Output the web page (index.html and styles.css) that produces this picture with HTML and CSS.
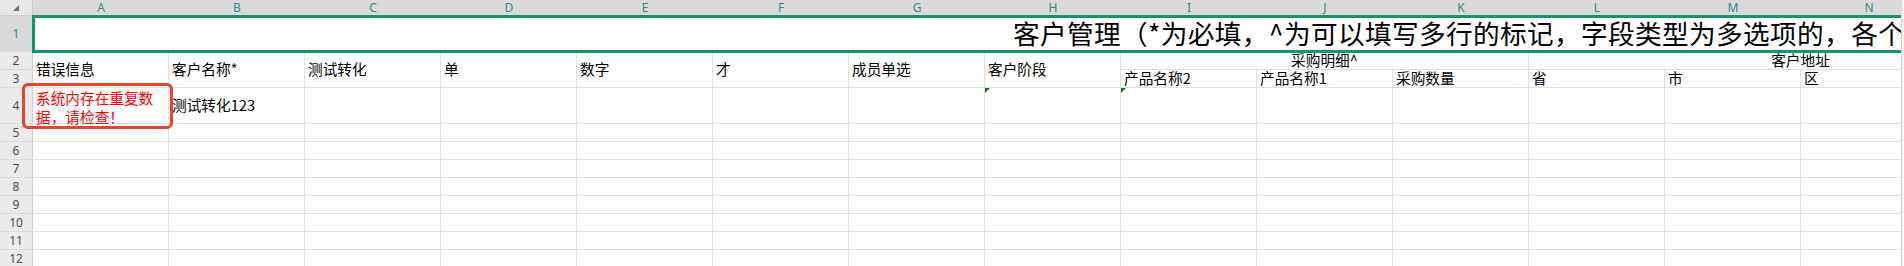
FILE: index.html
```html
<!DOCTYPE html>
<html lang="zh-CN">
  <head>
    <meta charset="UTF-8" />
    <meta name="viewport" content="width=device-width, initial-scale=1.0" />
    <title>客户管理</title>
    <link rel="stylesheet" href="styles.css">
  </head>
  <body>
    <div class="app">
      <div class="sheet">
        <div class="grid">
          <!-- column headers -->
          <div class="corner"><span class="corner-tri"></span></div>
          <div class="ch">A</div><div class="ch">B</div><div class="ch">C</div><div class="ch">D</div><div class="ch">E</div>
          <div class="ch">F</div><div class="ch">G</div><div class="ch">H</div><div class="ch">I</div><div class="ch">J</div>
          <div class="ch">K</div><div class="ch">L</div><div class="ch">M</div><div class="ch">N</div><div class="ch">O</div>

          <!-- row 1: title -->
          <div class="rh on">1</div>
          <div class="c title">客户管理（*为必填，^为可以填写多行的标记，字段类型为多选项的，各个选项用英文逗号隔开）</div>

          <!-- rows 2-3: field headers -->
          <div class="rh">2</div>
          <div class="c tall">错误信息</div>
          <div class="c tall">客户名称*</div>
          <div class="c tall">测试转化</div>
          <div class="c tall">单</div>
          <div class="c tall">数字</div>
          <div class="c tall">才</div>
          <div class="c tall">成员单选</div>
          <div class="c tall">客户阶段</div>
          <div class="c group3">采购明细^</div>
          <div class="c group4">客户地址</div>
          <div class="rh">3</div>
          <div class="c">产品名称2</div>
          <div class="c">产品名称1</div>
          <div class="c">采购数量</div>
          <div class="c">省</div>
          <div class="c">市</div>
          <div class="c">区</div>
          <div class="c"></div>

          <!-- row 4: data -->
          <div class="rh">4</div>
          <div class="c err">系统内存在重复数据，请检查！<span class="err-box"></span></div>
          <div class="c">测试转化123</div>
          <div class="c"></div><div class="c"></div><div class="c"></div><div class="c"></div><div class="c"></div>
          <div class="c note"></div>
          <div class="c note"></div>
          <div class="c"></div><div class="c"></div><div class="c"></div><div class="c"></div><div class="c"></div><div class="c"></div>

          <!-- empty rows -->
          <div class="rh">5</div><div class="c"></div><div class="c"></div><div class="c"></div><div class="c"></div><div class="c"></div><div class="c"></div><div class="c"></div><div class="c"></div><div class="c"></div><div class="c"></div><div class="c"></div><div class="c"></div><div class="c"></div><div class="c"></div><div class="c"></div>
          <div class="rh">6</div><div class="c"></div><div class="c"></div><div class="c"></div><div class="c"></div><div class="c"></div><div class="c"></div><div class="c"></div><div class="c"></div><div class="c"></div><div class="c"></div><div class="c"></div><div class="c"></div><div class="c"></div><div class="c"></div><div class="c"></div>
          <div class="rh">7</div><div class="c"></div><div class="c"></div><div class="c"></div><div class="c"></div><div class="c"></div><div class="c"></div><div class="c"></div><div class="c"></div><div class="c"></div><div class="c"></div><div class="c"></div><div class="c"></div><div class="c"></div><div class="c"></div><div class="c"></div>
          <div class="rh">8</div><div class="c"></div><div class="c"></div><div class="c"></div><div class="c"></div><div class="c"></div><div class="c"></div><div class="c"></div><div class="c"></div><div class="c"></div><div class="c"></div><div class="c"></div><div class="c"></div><div class="c"></div><div class="c"></div><div class="c"></div>
          <div class="rh">9</div><div class="c"></div><div class="c"></div><div class="c"></div><div class="c"></div><div class="c"></div><div class="c"></div><div class="c"></div><div class="c"></div><div class="c"></div><div class="c"></div><div class="c"></div><div class="c"></div><div class="c"></div><div class="c"></div><div class="c"></div>
          <div class="rh">10</div><div class="c"></div><div class="c"></div><div class="c"></div><div class="c"></div><div class="c"></div><div class="c"></div><div class="c"></div><div class="c"></div><div class="c"></div><div class="c"></div><div class="c"></div><div class="c"></div><div class="c"></div><div class="c"></div><div class="c"></div>
          <div class="rh">11</div><div class="c"></div><div class="c"></div><div class="c"></div><div class="c"></div><div class="c"></div><div class="c"></div><div class="c"></div><div class="c"></div><div class="c"></div><div class="c"></div><div class="c"></div><div class="c"></div><div class="c"></div><div class="c"></div><div class="c"></div>
          <div class="rh">12</div><div class="c"></div><div class="c"></div><div class="c"></div><div class="c"></div><div class="c"></div><div class="c"></div><div class="c"></div><div class="c"></div><div class="c"></div><div class="c"></div><div class="c"></div><div class="c"></div><div class="c"></div><div class="c"></div><div class="c"></div>
        </div>
      </div>
      <div class="vbar"></div>
    </div>
  </body>
</html>
```

FILE: styles.css
```css
html,
body {
  margin: 0;
  padding: 0;
  height: 100%;
}
body {
  background: #fff;
  color: #000;
  font-family: 'Noto Sans CJK SC', 'Noto Sans', sans-serif;
  font-size: 14.67px;
  overflow: hidden;
}
.app {
  display: flex;
  height: 266px;
}
.sheet {
  flex: none;
  width: 1901px;
  overflow: hidden;
}
.vbar {
  flex: 1;
  background: #f3f3f5;
  border-left: 1px solid #d4d4d4;
}
.grid {
  display: grid;
  grid-template-columns: 33px repeat(15, 136px);
  grid-template-rows: 16px 36px 18px 18px 36px repeat(8, 18px);
  width: 2073px;
}

/* headers */
.corner {
  display: flex;
  align-items: center;
  justify-content: center;
  background: #e8e8e8;
  border-right: 1px solid #cdcdcd;
  border-bottom: 1px solid #cdcdcd;
  box-sizing: border-box;
}
.corner-tri {
  width: 0;
  height: 0;
  border-left: 6px solid transparent;
  border-bottom: 6px solid #707070;
  margin-top: 1px;
}
.ch {
  background: #dadada;
  color: #2e8b86;
  font-family: 'Noto Sans', sans-serif;
  font-size: 12px;
  line-height: 15px;
  text-align: center;
  border-bottom: 1px solid #cdcdcd;
}
.rh {
  display: flex;
  align-items: center;
  justify-content: center;
  background: #ebebeb;
  color: #505050;
  font-family: 'Noto Sans', sans-serif;
  font-size: 12px;
  border-right: 1px solid #cdcdcd;
  border-bottom: 1px solid #dcdcdc;
  box-sizing: border-box;
}
.rh.on {
  background: #dadada;
  color: #2e8b86;
}

/* cells */
.c {
  display: flex;
  align-items: center;
  min-width: 0;
  padding: 0 3px;
  box-sizing: border-box;
  border-right: 1px solid #e1e1e1;
  border-bottom: 1px solid #e1e1e1;
  white-space: nowrap;
  overflow: hidden;
  line-height: 1;
}
.tall {
  grid-row: span 2;
}
.group3 {
  grid-column: span 3;
  justify-content: center;
}
.group4 {
  grid-column: span 4;
  justify-content: center;
}
.title {
  grid-column: 2 / -1;
  position: relative;
  z-index: 1;
  padding-left: 980px;
  font-size: 26.67px;
  letter-spacing: 0.35px;
  outline: 3px solid #16946a;
  outline-offset: -2px;
}
.err {
  position: relative;
  align-items: flex-start;
  color: #f00;
  white-space: normal;
  line-height: 19px;
  overflow: visible;
}
.err-box {
  position: absolute;
  left: -11px;
  top: -5px;
  width: 151px;
  height: 46px;
  border: 3px solid #e8442c;
  border-radius: 6px;
  box-sizing: border-box;
}
.note {
  position: relative;
}
.note::before {
  content: '';
  position: absolute;
  left: 0;
  top: 0;
  border-top: 5px solid #127a12;
  border-right: 5px solid transparent;
}
```
